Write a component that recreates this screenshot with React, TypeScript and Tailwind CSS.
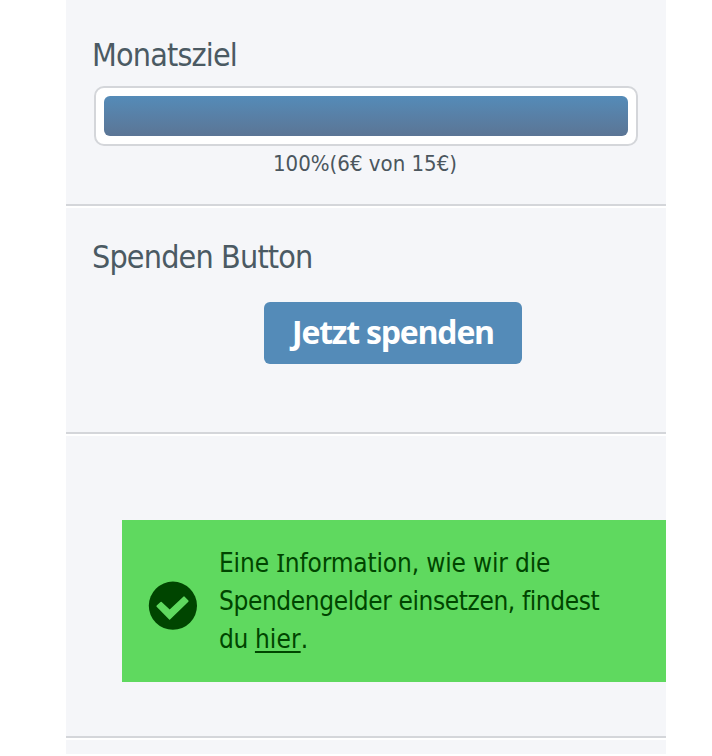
import React from 'react';
import clsx from 'clsx';

const goal = { percent: 100, current: 6, target: 15 };

function Section({ className, children }: { className?: string; children?: React.ReactNode }) {
  return (
    <section className={clsx('border-b-2 border-[#d4d6da] bg-[#f5f6f9]', className)}>
      {children}
    </section>
  );
}

function SectionTitle({ children }: { children: React.ReactNode }) {
  return (
    <h2 className="-ml-[2px] text-[32px] leading-[40px] tracking-[-0.85px] text-[#4b5a63]">
      {children}
    </h2>
  );
}

function CheckIcon() {
  return (
    <svg className="h-[49px] w-[49px] shrink-0" viewBox="0 0 49 49" fill="none">
      <circle cx="24.9" cy="24.7" r="24.1" fill="#004500" />
      <path
        d="M9.2 25.2 L13.1 21.5 L21.7 29.7 L36.1 16.2 L39.8 20.1 L21.5 37.8 Z"
        fill="#5fd95f"
        stroke="#5fd95f"
        strokeWidth="1.6"
        strokeLinejoin="round"
      />
    </svg>
  );
}

export default function App() {
  return (
    <div className="h-[756px] overflow-hidden bg-white font-['DejaVu_Sans_Condensed','DejaVu_Sans',sans-serif] [font-stretch:condensed]">
      <div className="ml-[66px] flex w-[600px] flex-col gap-[2px]">
        {/* Monthly goal */}
        <Section className="h-[206px] px-7 pt-[35px]">
          <SectionTitle>Monatsziel</SectionTitle>
          <div className="mt-[11px] h-[60px] w-[544px] rounded-[10px] border-2 border-[#d4d6da] bg-white p-2">
            <div
              className="h-10 rounded-[6px] bg-linear-to-b from-[#548bb8] to-[#5b7595]"
              style={{ width: `${goal.percent}%` }}
            />
          </div>
          <p className="mt-[4px] -ml-[2px] text-center text-[22px] leading-[28px] text-[#4b565e]">
            {goal.percent}%({goal.current}€ von {goal.target}€)
          </p>
        </Section>

        {/* Donate button */}
        <Section className="h-[226px] px-7 pt-[29px]">
          <SectionTitle>Spenden Button</SectionTitle>
          <div className="mt-[25px] flex justify-center pl-[54px]">
            <button className="h-[62px] w-[258px] rounded-[6px] bg-[#548bb8] pb-[2px] font-['Open_Sans',sans-serif] text-[32px] leading-[60px] font-bold tracking-[-1.2px] text-white [font-stretch:normal]">
              Jetzt spenden
            </button>
          </div>
        </Section>

        {/* Usage info */}
        <Section className="h-[302px] pt-[84px] pl-14">
          <div className="flex h-[162px] items-center bg-[#5fd95f] pl-[26px] text-[#004500]">
            <div className="mt-[9px] flex">
              <CheckIcon />
            </div>
            <p className="ml-[22px] w-[400px] text-[26px] leading-[38px] tracking-[-0.4px]">
              <span className="tracking-[-0.16px]">
                Eine <span className="font-['Noto_Sans',sans-serif] leading-none [font-stretch:normal]">I</span>
                nformation, wie wir die
              </span>
              <br />
              Spendengelder einsetzen, findest
              <br />
              <span>
                du{' '}
                <a href="#" className="tracking-[0.1px] underline decoration-2 underline-offset-[3px]">
                  hier
                </a>
                .
              </span>
            </p>
          </div>
        </Section>

        <div className="h-[14px] bg-[#f5f6f9]" />
      </div>
    </div>
  );
}
